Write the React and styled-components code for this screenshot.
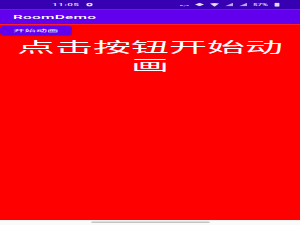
import React from "react";
import styled, { createGlobalStyle } from "styled-components";

// The screenshot is squashed vertically, so the whole phone screen is laid
// out at its natural height and then scaled down on the Y axis.
const SCALE_Y = 0.35;

const GlobalStyle = createGlobalStyle`
  html, body {
    margin: 0;
    padding: 0;
    width: 300px;
    height: 225px;
    overflow: hidden;
    background: #ffffff;
  }
`;

const Frame = styled.div`
  width: 300px;
  height: 225px;
  overflow: hidden;
`;

const Screen = styled.div`
  width: 300px;
  height: ${225 / SCALE_Y}px;
  display: flex;
  flex-direction: column;
  transform: scaleY(${SCALE_Y});
  transform-origin: top left;
  font-family: Roboto, "Noto Sans CJK SC", sans-serif;
`;

const StatusBar = styled.div`
  height: 26px;
  flex: none;
  background: #3700b3;
  display: flex;
  align-items: center;
  gap: 7px;
  padding: 0 20px 0 52px;
  color: #e4dcf4;
  font-size: 10px;
  font-weight: 500;
`;

const Time = styled.span`
  letter-spacing: 0.4px;
`;

const StatusRight = styled.div`
  margin-left: auto;
  display: flex;
  align-items: center;
  gap: 6px;
`;

const Tiny = styled.span`
  font-size: ${(p) => p.$size || 9}px;
`;

const Toolbar = styled.div`
  height: 43px;
  flex: none;
  background: #6200ee;
  display: flex;
  align-items: center;
  padding-left: 13px;
  color: #ffffff;
  font-size: 15.5px;
  font-weight: 500;
  letter-spacing: 0.2px;
`;

const Content = styled.div`
  flex: 1;
  background: #ff0000;
  display: flex;
  flex-direction: column;
  align-items: flex-start;
  padding-top: 5px;
`;

const Button = styled.button`
  width: 72px;
  height: 26px;
  border: none;
  border-radius: 3px / 9px;
  background: #6200ee;
  color: #ffffff;
  font-family: Roboto, "Noto Sans CJK SC", sans-serif;
  font-size: 11px;
  letter-spacing: 0.3px;
  padding: 0;
  box-shadow: 0 2px 2px rgba(0, 0, 0, 0.25);
`;

const Headline = styled.div`
  align-self: stretch;
  margin-top: 7px;
  text-align: center;
  color: #ffffff;
  font-family: "Noto Sans CJK SC", sans-serif;
  font-size: 38px;
  line-height: 52px;
`;

const NavBar = styled.div`
  height: 14px;
  flex: none;
  background: #fafafa;
  display: flex;
  justify-content: center;
  padding-top: 4px;
  box-sizing: border-box;
`;

const Handle = styled.div`
  width: 119px;
  height: 4px;
  border-radius: 2px;
  background: #c4c4c4;
`;

const Icon = ({ w, h, children }) => (
  <svg width={w} height={h} viewBox="0 0 10 10" preserveAspectRatio="none">
    {children}
  </svg>
);

export default function App() {
  return (
    <Frame>
      <GlobalStyle />
      <Screen>
        <StatusBar>
          <Time>11:05</Time>
          <Icon w={7} h={12}>
            <circle cx="5" cy="5" r="4.5" fill="#e4dcf4" />
            <circle cx="5" cy="5" r="1.8" fill="#3700b3" />
          </Icon>
          <StatusRight>
            <Tiny $size={6}>K/s</Tiny>
            <Icon w={9} h={10}>
              <polygon points="5,0 10,5 5,10 0,5" fill="#e4dcf4" />
            </Icon>
            <Icon w={9} h={11}>
              <path d="M0 2 Q5 -1 10 2 L5 10 Z" fill="#e4dcf4" />
            </Icon>
            <Icon w={8} h={10}>
              <polygon points="10,0 10,10 0,10" fill="#b8a6e8" />
            </Icon>
            <Icon w={8} h={10}>
              <polygon points="10,0 10,10 0,10" fill="#b8a6e8" />
            </Icon>
            <Tiny $size={8}>57%</Tiny>
            <Icon w={6} h={12}>
              <rect x="1" y="1" width="8" height="9" rx="1" fill="#e4dcf4" />
            </Icon>
          </StatusRight>
        </StatusBar>
        <Toolbar>RoomDemo</Toolbar>
        <Content>
          <Button>开始动画</Button>
          <Headline>点击按钮开始动画</Headline>
        </Content>
        <NavBar>
          <Handle />
        </NavBar>
      </Screen>
    </Frame>
  );
}
